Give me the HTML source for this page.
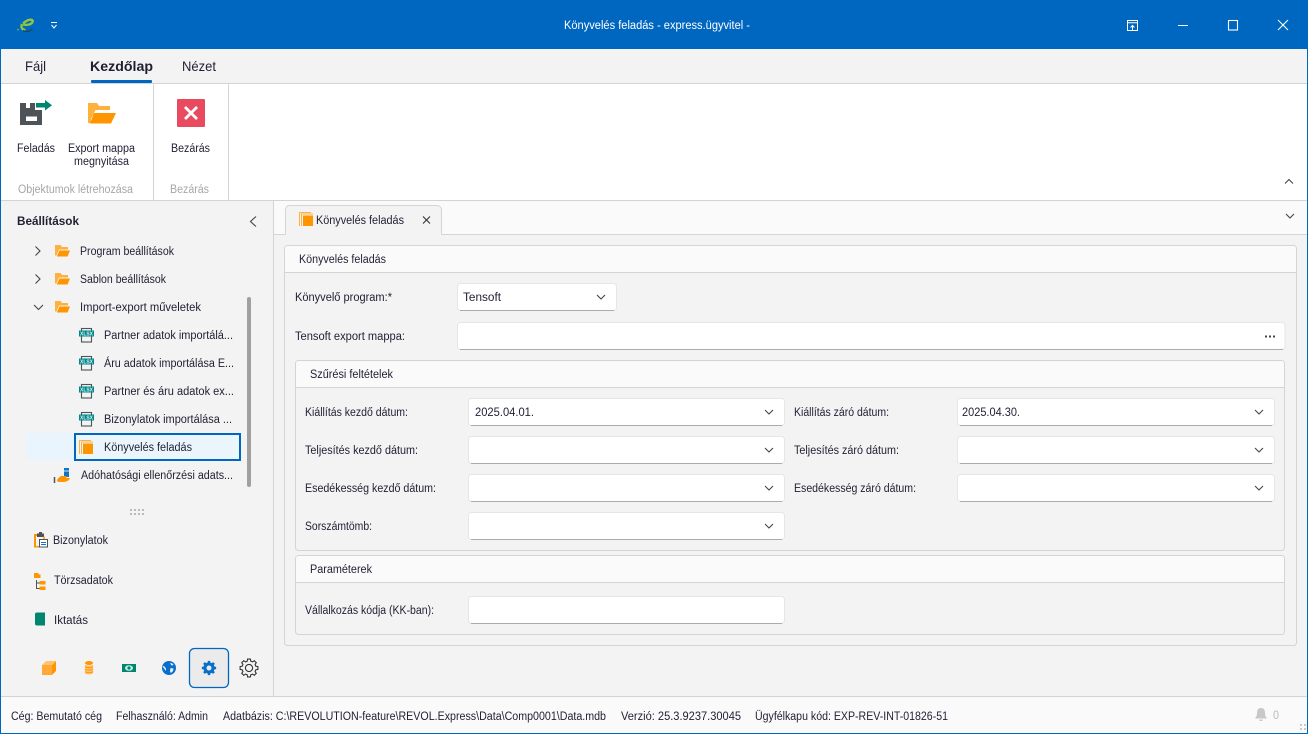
<!DOCTYPE html>
<html lang="hu"><head><meta charset="utf-8"><title>Könyvelés feladás</title>
<style>
html,body{margin:0;padding:0;width:1308px;height:734px;overflow:hidden;background:#f3f3f3}
svg{display:block}
text{font-family:"Liberation Sans",sans-serif;font-size:11.5px;fill:#1f1f33;white-space:pre}
.b{font-weight:700}
.m{font-size:14px}
.g{fill:#a6a6a6}
.w{fill:#fff}
.x{font-size:5.5px;font-weight:700;fill:#d8f2f2}
.l{stroke:#d4d4d4;stroke-width:1;fill:none}
.f{fill:#fff;stroke:#e6e6e6;stroke-width:1}
.fb{stroke:#ababab;stroke-width:1;fill:none}
.c{stroke:#444;stroke-width:1.100;fill:none}
</style></head><body>
<svg width="1308" height="734" viewBox="0 0 1308 734" xmlns="http://www.w3.org/2000/svg">
<defs>
<path id="ch" d="M-4 -2L0 2L4 -2" fill="none" stroke="#444" stroke-width="1.100"/>
<g id="fld"><path d="M0 0h5.500l1.500 2h6v2.500H4L1.500 10.500H0z" fill="#ffb13d"/><path d="M4.500 5.500H15l-2.500 6H1.800z" fill="#ff9500"/></g>
<g id="xl"><rect x="2.500" y="0.500" width="10" height="13.500" fill="none" stroke="#4d5357" stroke-width="1.100"/><rect x="0" y="2.500" width="15" height="6" fill="#00868a"/><text x="1" y="7.400" class="x" textLength="13" lengthAdjust="spacingAndGlyphs">XLSX</text></g>
<g id="bk"><path d="M0 0h12v1H1v13H0z" fill="#ffb13d"/><path d="M2 1.500h12v1H3v11.500H2z" fill="#ffb13d"/><rect x="4" y="3.500" width="10" height="10.500" fill="#ff9500"/></g>
<polygon id="gr" points="6.760,-1.810 8.890,-1.410 8.890,1.410 6.760,1.810 6.060,3.500 7.280,5.290 5.290,7.280 3.500,6.060 1.810,6.760 1.410,8.890 -1.410,8.890 -1.810,6.760 -3.500,6.060 -5.290,7.280 -7.280,5.290 -6.060,3.500 -6.760,1.810 -8.890,1.410 -8.890,-1.410 -6.760,-1.810 -6.060,-3.500 -7.280,-5.290 -5.290,-7.280 -3.500,-6.060 -1.810,-6.760 -1.410,-8.890 1.410,-8.890 1.810,-6.760 3.500,-6.060 5.290,-7.280 7.280,-5.290 6.060,-3.500"/>
</defs>

<!-- base -->
<rect width="1308" height="734" fill="#f3f3f3"/>
<!-- title bar -->
<rect width="1308" height="49" fill="#0067c0"/>
<path d="M23 23.500c3-3 7-4.500 9-3.500 1.500 1 .5 3.500-3 4.500-2 .5-4 .5-6 0" fill="none" stroke="#8dc63f" stroke-width="2.400"/>
<path d="M22 24c-1.500 3.500.5 6 3.500 6" fill="none" stroke="#8dc63f" stroke-width="2.400"/>
<path d="M23 30.500c3 1.500 7 1 9.500-1.500" fill="none" stroke="#1d4a63" stroke-width="1.500"/>
<circle cx="18" cy="29.500" r=".8" fill="#8dc63f"/>
<path d="M51 22.500h6M51.500 25l2.500 3 2.500-3" fill="none" stroke="#fff" stroke-width="1"/>
<text x="564" y="29" class="w" textLength="186" lengthAdjust="spacingAndGlyphs">Könyvelés feladás - express.ügyvitel -</text>
<g fill="none" stroke="#fff" stroke-width="1">
<rect x="1127.500" y="20.500" width="10" height="10"/><path d="M1127.500 22.800h10M1132.500 30v-4.500M1130.500 27.500l2-2 2 2"/>
<path d="M1178 25.500h10"/>
<rect x="1228.500" y="20.500" width="9" height="9.500" stroke-width="1.100"/>
<path d="M1278 20l10 10M1288 20l-10 10" stroke-width="1.100"/>
</g>

<!-- menu band -->
<rect y="49" width="1308" height="34" fill="#f3f3f3"/>
<path class="l" d="M0 83.500H1308"/>
<text x="25" y="71" class="m" textLength="21" lengthAdjust="spacingAndGlyphs">Fájl</text>
<text x="90" y="71" class="m b" textLength="63" lengthAdjust="spacingAndGlyphs">Kezdőlap</text>
<text x="182" y="71" class="m" textLength="34" lengthAdjust="spacingAndGlyphs">Nézet</text>
<rect x="91" y="80" width="61" height="3" rx="1" fill="#0067c0"/>

<!-- ribbon -->
<rect y="84" width="1308" height="116" fill="#fff"/>
<path class="l" d="M0 200.500H1308M153.500 84V200M228.500 84V200"/>
<path d="M20 103H26V108H30V103H35V110H42V125H20ZM26 116.500v4.500h11v-4.500z" fill="#4d5357" fill-rule="evenodd"/>
<path d="M36 103h9v-3l7 5.200-7 5.300v-3h-9z" fill="#00866f"/>
<path d="M88 103h9l2 3h11v4H95.500L91 119v4h-3z" fill="#ffb13d"/>
<path d="M94 113h22l-5 10.500H90z" fill="#ff9500"/>
<rect x="177" y="99" width="28" height="28" rx="1" fill="#e84a5f"/>
<path d="M185 107l12 12M197 107l-12 12" stroke="#fff" stroke-width="2.800" fill="none"/>
<text x="17" y="152" textLength="38" lengthAdjust="spacingAndGlyphs">Feladás</text>
<text x="68" y="152" textLength="67" lengthAdjust="spacingAndGlyphs">Export mappa</text>
<text x="74" y="165" textLength="55" lengthAdjust="spacingAndGlyphs">megnyitása</text>
<text x="171" y="152" textLength="39" lengthAdjust="spacingAndGlyphs">Bezárás</text>
<text x="18" y="193" class="g" textLength="115" lengthAdjust="spacingAndGlyphs">Objektumok létrehozása</text>
<text x="170" y="193" class="g" textLength="39" lengthAdjust="spacingAndGlyphs">Bezárás</text>
<use href="#ch" transform="translate(1289 181.500) scale(1 -1)"/>

<!-- sidebar -->
<path class="l" d="M273.500 201V696"/>
<text x="17" y="225" class="b" textLength="62" lengthAdjust="spacingAndGlyphs">Beállítások</text>
<path d="M256 216.500L250.500 221.500L256 226.500" class="c"/>
<path d="M35.500 246.500l4.500 4.500-4.500 4.500M35.500 274.500l4.500 4.500-4.500 4.500M34 305l4.500 4.500 4.500-4.500" class="c"/>
<use href="#fld" x="55" y="245"/><use href="#fld" x="55" y="273"/><use href="#fld" x="55" y="301"/>
<text x="80" y="255" textLength="94" lengthAdjust="spacingAndGlyphs">Program beállítások</text>
<text x="80" y="283" textLength="86" lengthAdjust="spacingAndGlyphs">Sablon beállítások</text>
<text x="80" y="311" textLength="121" lengthAdjust="spacingAndGlyphs">Import-export műveletek</text>
<use href="#xl" x="79" y="328"/><use href="#xl" x="79" y="356"/><use href="#xl" x="79" y="384"/><use href="#xl" x="79" y="412"/>
<text x="104" y="339" textLength="129" lengthAdjust="spacingAndGlyphs">Partner adatok importálá...</text>
<text x="104" y="367" textLength="130" lengthAdjust="spacingAndGlyphs">Áru adatok importálása E...</text>
<text x="104" y="395" textLength="130" lengthAdjust="spacingAndGlyphs">Partner és áru adatok ex...</text>
<text x="104" y="423" textLength="128" lengthAdjust="spacingAndGlyphs">Bizonylatok importálása ...</text>
<rect x="26" y="433" width="215" height="28" fill="#e9f4fc"/>
<rect x="75" y="434" width="165" height="26" fill="#ebf5fc" stroke="#0067c0" stroke-width="2"/>
<use href="#bk" x="79" y="440"/>
<text x="104" y="451" textLength="88" lengthAdjust="spacingAndGlyphs">Könyvelés feladás</text>
<path d="M54.500 477v6" stroke="#4d5357" stroke-width="1.500" fill="none"/>
<rect x="64" y="468" width="5" height="9" fill="#1173c7"/><rect x="64" y="470.500" width="5" height="1" fill="#cfe4f5"/>
<path d="M57 480c2-3 4-4.500 6-4h3c1 0 1 2 0 2h4c-1 3-4 4-7 4h-4c-1 0-2-.5-2-2z" fill="#ff9500"/>
<text x="81" y="479" textLength="152" lengthAdjust="spacingAndGlyphs">Adóhatósági ellenőrzési adats...</text>
<rect x="247" y="297" width="4" height="190" rx="2" fill="#a0a0a0"/>
<g fill="#b9b9b9"><rect x="130" y="509" width="2" height="2"/><rect x="134" y="509" width="2" height="2"/><rect x="138" y="509" width="2" height="2"/><rect x="142" y="509" width="2" height="2"/><rect x="130" y="513" width="2" height="2"/><rect x="134" y="513" width="2" height="2"/><rect x="138" y="513" width="2" height="2"/><rect x="142" y="513" width="2" height="2"/></g>

<!-- Bizonylatok icon -->
<path d="M34 534h6v2h-4v10h3v1.500h-5z" fill="#ff9500"/>
<rect x="37" y="533.500" width="7" height="3.500" fill="#4d5357"/><rect x="39" y="532" width="3" height="2" fill="#4d5357"/>
<path d="M44 536.500v3" stroke="#ff9500" stroke-width="1.500"/>
<rect x="39.500" y="539.500" width="8" height="7.500" fill="#fff" stroke="#4d5357"/><path d="M41 542.500h5M41 544.500h5" stroke="#1173c7"/>
<text x="53" y="544" textLength="55" lengthAdjust="spacingAndGlyphs">Bizonylatok</text>
<!-- Törzsadatok icon -->
<path d="M34 573h4l1 1.500h1.500V578H34z" fill="#ff9500"/>
<path d="M39.500 581h6v3.500h-6zM39.500 586.500h6v3.500h-6z" fill="#ff9500"/>
<path d="M36.500 580v8.500h3M36.500 583h3" stroke="#4d5357" fill="none"/>
<text x="54" y="584" textLength="59" lengthAdjust="spacingAndGlyphs">Törzsadatok</text>
<!-- Iktatás icon -->
<path d="M35 614c0-1 1-1.500 2-1.500h8v13H37c-1 0-2-.5-2-1.500z" fill="#00866f"/>
<text x="54" y="624" textLength="34" lengthAdjust="spacingAndGlyphs">Iktatás</text>

<!-- bottom icons -->
<path d="M42 665h10v10H42z" fill="#ffa838"/><path d="M42 665l4-4h10l-4 4z" fill="#ffc26e"/><path d="M52 665l4-4v10l-4 4z" fill="#ff9500"/>
<ellipse cx="89" cy="663" rx="4" ry="2" fill="#ff9500"/>
<path d="M85 664v9c0 2 8 2 8 0v-9c0 2-8 2-8 0z" fill="#ffc26e"/>
<path d="M85 666.500c1 1.500 7 1.500 8 0M85 669c1 1.500 7 1.500 8 0M85 671.500c1 1.500 7 1.500 8 0" stroke="#ff9500" fill="none"/>
<rect x="122" y="664" width="14" height="8" fill="#00866f"/><ellipse cx="129" cy="668" rx="4" ry="2.800" fill="#c8ece3"/><circle cx="129" cy="668" r="1.600" fill="#00866f"/>
<circle cx="169" cy="668" r="7" fill="#0a6fc9"/>
<path d="M170 663l2.500.5 1 1.500-2 .5zM170.500 668l3 .5-.5 2.500-2 2-1-1.500z" fill="#e8f2fb"/><path d="M162.500 666.500l1.500-.5 2 2.500v2.500z" fill="#e8f2fb"/>
<rect x="189.500" y="648.500" width="39" height="39" rx="5" fill="#ebebeb" stroke="#0067c0" stroke-width="1.300"/>
<use href="#gr" transform="translate(209 668) scale(.8)" fill="#0a6fc9"/><circle cx="209" cy="668" r="2.500" fill="#ebebeb"/>
<use href="#gr" transform="translate(249 668)" fill="none" stroke="#333" stroke-width="1.100"/><circle cx="249" cy="668" r="3.600" fill="none" stroke="#333" stroke-width="1.100"/>

<!-- status bar -->
<rect y="697" width="1308" height="36" fill="#fafafa"/>
<path class="l" d="M0 696.500H1308"/>
<text x="11" y="720" textLength="91" lengthAdjust="spacingAndGlyphs">Cég: Bemutató cég</text>
<text x="116" y="720" textLength="92" lengthAdjust="spacingAndGlyphs">Felhasználó: Admin</text>
<text x="223" y="720" textLength="383" lengthAdjust="spacingAndGlyphs">Adatbázis: C:\REVOLUTION-feature\REVOL.Express\Data\Comp0001\Data.mdb</text>
<text x="621" y="720" textLength="120" lengthAdjust="spacingAndGlyphs">Verzió: 25.3.9237.30045</text>
<text x="755" y="720" textLength="193" lengthAdjust="spacingAndGlyphs">Ügyfélkapu kód: EXP-REV-INT-01826-51</text>
<path d="M1261 708c-3 0-4 2-4 5 0 3-1 4-2 5.500h12c-1-1.500-2-2.500-2-5.500 0-3-1-5-4-5z" fill="#c8c8c8"/><rect x="1259.500" y="719.500" width="3" height="1.500" fill="#c8c8c8"/>
<text x="1273" y="719" style="fill:#bbb" textLength="6" lengthAdjust="spacingAndGlyphs">0</text>
<g fill="#c9c9c9"><rect x="1300" y="724" width="2" height="2"/><rect x="1304" y="724" width="2" height="2"/><rect x="1304" y="728" width="2" height="2"/><rect x="1300" y="728" width="2" height="2"/></g>

<!-- tab strip -->
<rect x="274" y="201" width="1034" height="33" fill="#fafafa"/>
<path class="l" d="M274 234.500H285.500M441.500 234.500H1308"/>
<path d="M285.500 234.500c0-1 0-2 0-3V210c0-2.500 1.500-4.500 4-4.500H437c2.500 0 4.500 2 4.500 4.500v21.500c0 1 0 2 0 3" fill="#f3f3f3" stroke="#d4d4d4"/>
<use href="#bk" x="299" y="212"/>
<text x="316" y="224" textLength="88" lengthAdjust="spacingAndGlyphs">Könyvelés feladás</text>
<path d="M423 216.500l7 7M430 216.500l-7 7" stroke="#333" stroke-width="1.100" fill="none"/>
<use href="#ch" transform="translate(1290 216)"/>

<!-- main panel -->
<rect x="284.500" y="245.500" width="1012" height="400" rx="3" fill="#f3f3f3" stroke="#d4d4d4"/>
<path d="M285 272V248.500c0-1.500 1-2.500 2.500-2.500h1006c1.500 0 2.500 1 2.500 2.500V272z" fill="#fafafa"/>
<path class="l" d="M285 272.500H1296"/>
<text x="299" y="263" textLength="87" lengthAdjust="spacingAndGlyphs">Könyvelés feladás</text>

<text x="295" y="301" textLength="97" lengthAdjust="spacingAndGlyphs">Könyvelő program:*</text>
<rect class="f" x="457.500" y="283.500" width="159" height="27" rx="3"/><path class="fb" d="M460 310.500H614"/>
<text x="463" y="301" textLength="38" lengthAdjust="spacingAndGlyphs">Tensoft</text>
<use href="#ch" transform="translate(601 297)"/>

<text x="295" y="340" textLength="110" lengthAdjust="spacingAndGlyphs">Tensoft export mappa:</text>
<rect class="f" x="457.500" y="322.500" width="827.500" height="27" rx="3"/><path class="fb" d="M460 349.500H1283"/>
<g fill="#444"><rect x="1265" y="335.500" width="2" height="2"/><rect x="1269" y="335.500" width="2" height="2"/><rect x="1273" y="335.500" width="2" height="2"/></g>

<!-- group: Szűrési feltételek -->
<rect x="295.500" y="360.500" width="989" height="190" rx="3" fill="#f3f3f3" stroke="#d4d4d4"/>
<path d="M296 387V363.500c0-1.500 1-2.500 2.500-2.500h983c1.500 0 2.500 1 2.500 2.500V387z" fill="#fafafa"/>
<path class="l" d="M296 387.500H1284"/>
<text x="310" y="378" textLength="83" lengthAdjust="spacingAndGlyphs">Szűrési feltételek</text>

<text x="305" y="416" textLength="103" lengthAdjust="spacingAndGlyphs">Kiállítás kezdő dátum:</text>
<rect class="f" x="468.500" y="398.500" width="316" height="27" rx="3"/><path class="fb" d="M471 425.500H782"/>
<text x="475" y="416" textLength="59" lengthAdjust="spacingAndGlyphs">2025.04.01.</text>
<use href="#ch" transform="translate(769 412)"/>
<text x="794" y="416" textLength="95" lengthAdjust="spacingAndGlyphs">Kiállítás záró dátum:</text>
<rect class="f" x="957.500" y="398.500" width="317" height="27" rx="3"/><path class="fb" d="M960 425.500H1272"/>
<text x="962" y="416" textLength="58" lengthAdjust="spacingAndGlyphs">2025.04.30.</text>
<use href="#ch" transform="translate(1259 412)"/>

<text x="305" y="454" textLength="113" lengthAdjust="spacingAndGlyphs">Teljesítés kezdő dátum:</text>
<rect class="f" x="468.500" y="436.500" width="316" height="27" rx="3"/><path class="fb" d="M471 463.500H782"/>
<use href="#ch" transform="translate(769 450)"/>
<text x="794" y="454" textLength="105" lengthAdjust="spacingAndGlyphs">Teljesítés záró dátum:</text>
<rect class="f" x="957.500" y="436.500" width="317" height="27" rx="3"/><path class="fb" d="M960 463.500H1272"/>
<use href="#ch" transform="translate(1259 450)"/>

<text x="305" y="492" textLength="131" lengthAdjust="spacingAndGlyphs">Esedékesség kezdő dátum:</text>
<rect class="f" x="468.500" y="474.500" width="316" height="27" rx="3"/><path class="fb" d="M471 501.500H782"/>
<use href="#ch" transform="translate(769 488)"/>
<text x="794" y="492" textLength="122" lengthAdjust="spacingAndGlyphs">Esedékesség záró dátum:</text>
<rect class="f" x="957.500" y="474.500" width="317" height="27" rx="3"/><path class="fb" d="M960 501.500H1272"/>
<use href="#ch" transform="translate(1259 488)"/>

<text x="305" y="530" textLength="67" lengthAdjust="spacingAndGlyphs">Sorszámtömb:</text>
<rect class="f" x="468.500" y="512.500" width="316" height="27" rx="3"/><path class="fb" d="M471 539.500H782"/>
<use href="#ch" transform="translate(769 526)"/>

<!-- group: Paraméterek -->
<rect x="295.500" y="555.500" width="989" height="79" rx="3" fill="#f3f3f3" stroke="#d4d4d4"/>
<path d="M296 582V558.500c0-1.500 1-2.500 2.500-2.500h983c1.500 0 2.500 1 2.500 2.500V582z" fill="#fafafa"/>
<path class="l" d="M296 582.500H1284"/>
<text x="310" y="573" textLength="62" lengthAdjust="spacingAndGlyphs">Paraméterek</text>
<text x="305" y="614" textLength="129" lengthAdjust="spacingAndGlyphs">Vállalkozás kódja (KK-ban):</text>
<rect class="f" x="468.500" y="596.500" width="316" height="27" rx="3"/><path class="fb" d="M471 623.500H782"/>

<!-- window frame -->
<rect x=".5" y=".5" width="1307" height="733" fill="none" stroke="#0067c0"/>
</svg>
</body></html>
